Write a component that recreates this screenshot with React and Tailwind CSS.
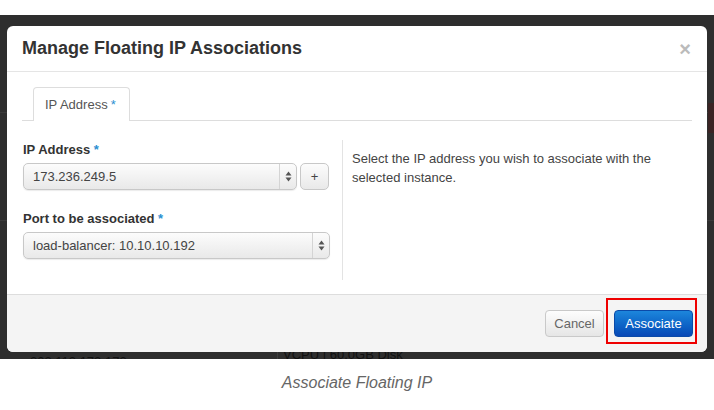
import React from "react";

function Arrows() {
  return (
    <svg width="7" height="11" viewBox="0 0 7 11">
      <path d="M3.5 0.5 L6.5 4.5 L0.5 4.5 Z" fill="#555" />
      <path d="M3.5 10.5 L6.5 6.5 L0.5 6.5 Z" fill="#555" />
    </svg>
  );
}

function Select({ value, className }) {
  return (
    <div
      className={`flex h-[27px] items-stretch rounded-[5px] border border-[#c8c8c8] bg-gradient-to-b from-[#fcfcfc] to-[#e9e9e9] shadow-[0_1px_1px_rgba(0,0,0,0.08)] ${className}`}
    >
      <div className="flex flex-1 items-center pl-[9px] text-[13px] text-[#444]">{value}</div>
      <div className="flex w-[17px] items-center justify-center border-l border-[#d4d4d4]">
        <Arrows />
      </div>
    </div>
  );
}

export default function App() {
  return (
    <div
      className="h-[410px] w-[714px] bg-white"
      style={{ fontFamily: '"Liberation Sans", Arial, sans-serif' }}
    >
      <div className="relative mt-[15px] h-[344px] overflow-hidden bg-[#2e2e2e] px-[7px] pt-[11px]">
        {/* faint background page fragments */}
        <div className="absolute left-0 top-[97px] h-px w-full bg-[#3a3a3a]" />
        <div className="absolute left-0 top-[205px] h-px w-full bg-[#3a3a3a]" />
        <div className="absolute left-[30px] top-[337px] text-[13px] text-[#111]">203.113.173.173</div>
        <div className="absolute left-[277px] top-[324px] h-[20px] w-px bg-[#3c3c3c]" />
        <div className="absolute left-[283px] top-[330px] text-[13px] text-[#111]">VCPU | 60.0GB Disk</div>
        <div className="absolute left-[708px] top-[88px] h-[30px] w-[6px] bg-[#3b2424]" />

        <div className="relative flex h-[326px] w-[700px] flex-col overflow-hidden rounded-[6px] bg-white">
          {/* header */}
          <div className="flex h-[46px] items-center justify-between border-b border-[#e5e5e5] pl-[15px] pr-[16px]">
            <div className="text-[18px] font-bold text-[#333]">Manage Floating IP Associations</div>
            <div className="text-[20px] font-bold leading-none text-[#bbb]">×</div>
          </div>

          {/* body */}
          <div className="flex-1 px-[15px] pt-[15px]">
            <div className="flex border-b border-[#ddd] pl-[11px]">
              <div className="-mb-px flex h-[34px] w-[97px] items-center rounded-t-[4px] border border-b-0 border-[#ddd] bg-white pl-[11px] text-[13px] text-[#555]">
                IP Address<span className="ml-[3px] text-[#2b8fd1]">*</span>
              </div>
            </div>

            <div className="flex pt-[21px]">
              <div className="w-[308px] pl-px">
                <div className="mb-[5px] text-[13px] font-bold leading-[16px] text-[#333]">
                  IP Address <span className="text-[#2b8fd1]">*</span>
                </div>
                <div className="flex gap-[3px]">
                  <Select value="173.236.249.5" className="w-[274px]" />
                  <div className="flex h-[27px] w-[29px] items-center justify-center rounded-[5px] border border-[#c8c8c8] bg-gradient-to-b from-[#fcfcfc] to-[#e9e9e9] text-[13px] text-[#444]">
                    +
                  </div>
                </div>
                <div className="mb-[5px] mt-[21px] text-[13px] font-bold leading-[16px] text-[#333]">
                  Port to be associated <span className="text-[#2b8fd1]">*</span>
                </div>
                <Select value="load-balancer: 10.10.10.192" className="w-[307px]" />
              </div>
              <div className="-mt-[2px] ml-[12px] h-[140px] w-px self-start bg-[#e3e3e3]" />
              <div className="pl-[9px] pt-[7px] text-[13px] leading-[19px] text-[#444]">
                Select the IP address you wish to associate with the
                <br />
                selected instance.
              </div>
            </div>
          </div>

          {/* footer */}
          <div className="relative flex h-[58px] items-center justify-end gap-[10px] border-t border-[#ddd] bg-[#f4f4f4] pr-[14px]">
            <div className="flex h-[27px] w-[59px] items-center justify-center rounded-[4px] border border-[#c9c9c9] bg-gradient-to-b from-[#fdfdfd] to-[#e6e6e6] text-[13px] text-[#666]">
              Cancel
            </div>
            <div className="flex h-[27px] w-[79px] items-center justify-center rounded-[4px] border border-[#0b4aa8] bg-gradient-to-b from-[#1d86dc] to-[#0948b6] text-[13px] text-white">
              Associate
            </div>
            <div className="absolute right-[10px] top-[3px] h-[46px] w-[91px] border-2 border-[#ee0000]" />
          </div>
        </div>
      </div>
      <div className="pt-[12px] text-center text-[16px] italic text-[#666]">Associate Floating IP</div>
    </div>
  );
}
